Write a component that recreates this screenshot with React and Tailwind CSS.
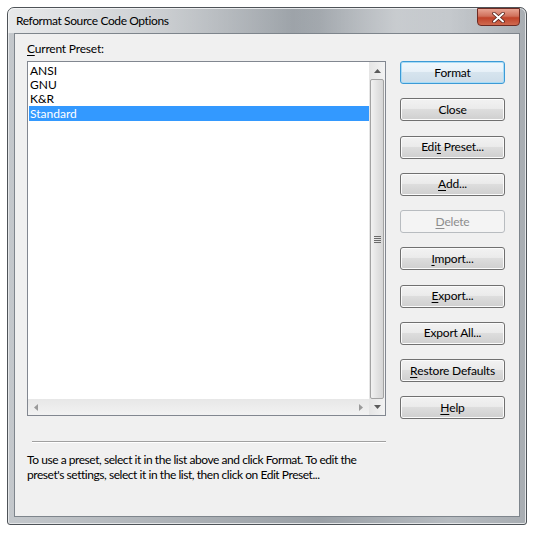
import React from "react";

const font = { fontFamily: 'Lato, "Noto Sans", sans-serif' };

function Btn({ children, primary, disabled }) {
  let cls =
    "h-[23px] w-[105px] rounded-[3px] border flex items-center justify-center text-[12px] leading-none tracking-[-0.2px] ";
  if (primary) {
    cls +=
      "border-[#3c9ad6] bg-[linear-gradient(#f0f7fc_0%,#e8f1f8_45%,#d6e4ee_50%,#cddde9_100%)] text-black shadow-[inset_0_0_0_1px_#a9dcf6]";
  } else if (disabled) {
    cls += "border-[#b8bcc0] bg-[#f4f4f4] text-[#8d8d8d]";
  } else {
    cls +=
      "border-[#707070] bg-[linear-gradient(#f2f2f2_0%,#ebebeb_45%,#dddddd_50%,#cfcfcf_100%)] text-black shadow-[inset_0_0_0_1px_#fbfbfb]";
  }
  return <div className={cls}>{children}</div>;
}

function U({ children }) {
  return <span className="underline underline-offset-2">{children}</span>;
}

export default function App() {
  return (
    <div className="w-[535px] h-[533px] bg-white" style={font}>
      <div className="pl-[7px] pt-[7px]">
        <div className="w-[520px] h-[518px] rounded-t-[7px] rounded-b-[3px] border border-[#4e5358] bg-[linear-gradient(90deg,#c4c8cc_0%,#abb0b5_35%,#9aa0a6_60%,#b6bbc0_85%,#a8adb2_100%)] shadow-[inset_0_0_0_1px_#e4e6e8] flex flex-col">
          <div className="h-[25px] flex items-center justify-between pl-[8px] pr-[6px] bg-[linear-gradient(90deg,rgba(255,255,255,0.6)_0%,rgba(255,255,255,0.35)_30%,rgba(255,255,255,0)_55%,rgba(255,255,255,0.35)_75%,rgba(255,255,255,0)_100%)] rounded-t-[6px]">
            <span className="text-[12px] text-black tracking-[-0.4px]">Reformat Source Code Options</span>
            <div className="w-[43px] h-[18px] -mt-[7px] rounded-b-[4px] border border-[#6d2a22] bg-[linear-gradient(#e8a493_0%,#d0705b_45%,#c0432a_55%,#d06a4f_100%)] flex items-center justify-center">
              <svg width="13" height="11" viewBox="0 0 13 11">
                <path d="M2 1.5 L11 9.5 M11 1.5 L2 9.5" stroke="#4a1a14" strokeWidth="3.4" strokeLinecap="round" />
                <path d="M2 1.5 L11 9.5 M11 1.5 L2 9.5" stroke="#ffffff" strokeWidth="2" strokeLinecap="round" />
              </svg>
            </div>
          </div>
          <div className="flex-1 mx-[6px] mb-[7px] border border-[#7e858c] bg-[#f0f0f0] flex">
            <div className="w-[371px] shrink-0 pl-[12px] pt-[7px] flex flex-col">
              <div className="h-[16px] leading-[16px] text-[12px] text-black tracking-[-0.2px]">
                <U>C</U>urrent Preset:
              </div>
              <div className="mt-[4px] w-[359px] h-[355px] border border-[#828790] bg-white flex flex-col">
                <div className="flex flex-1">
                  <div className="flex-1 pt-[2px] pl-[1px] text-[12px]">
                    <div className="h-[14px] leading-[14px] pl-[1px]">ANSI</div>
                    <div className="h-[14px] leading-[14px] pl-[1px]">GNU</div>
                    <div className="h-[14px] leading-[14px] pl-[1px]">K&amp;R</div>
                    <div className="h-[15px] leading-[15px] pl-[1px] bg-[#3399ff] text-white">Standard</div>
                  </div>
                  <div className="w-[16px] bg-[linear-gradient(90deg,#e5e5e5,#f3f3f3)] flex flex-col">
                    <div className="h-[17px] flex items-center justify-center">
                      <svg width="7" height="4" viewBox="0 0 7 4"><path d="M0 4 L3.5 0 L7 4Z" fill="#5a5a5a" /></svg>
                    </div>
                    <div className="flex-1 mx-[1px] rounded-[2px] border border-[#a3a3a3] bg-[linear-gradient(90deg,#f2f2f2,#e3e3e3_50%,#d6d6d6)] flex items-center justify-center">
                      <svg width="7" height="7" viewBox="0 0 7 7">
                        <path d="M0 0.5 H7 M0 2.5 H7 M0 4.5 H7 M0 6.5 H7" stroke="#6a6a6a" strokeWidth="1" />
                      </svg>
                    </div>
                  </div>
                </div>
                <div className="h-[16px] flex">
                  <div className="flex-1 bg-[linear-gradient(#e7e7e7,#f2f2f2)] flex items-center justify-between px-[6px]">
                    <svg width="4" height="7" viewBox="0 0 4 7"><path d="M4 0 L0 3.5 L4 7Z" fill="#9a9a9a" /></svg>
                    <svg width="4" height="7" viewBox="0 0 4 7"><path d="M0 0 L4 3.5 L0 7Z" fill="#9a9a9a" /></svg>
                  </div>
                  <div className="w-[16px] bg-[linear-gradient(90deg,#e5e5e5,#f3f3f3)] flex items-center justify-center">
                    <svg width="7" height="4" viewBox="0 0 7 4"><path d="M0 0 L3.5 4 L7 0Z" fill="#5a5a5a" /></svg>
                  </div>
                </div>
              </div>
              <div className="mt-[25px] ml-[5px] w-[354px] h-[2px] border-t border-[#a0a0a0] border-b border-b-white" />
              <div className="mt-[9px] text-[12px] leading-[15px] text-black whitespace-nowrap tracking-[-0.45px]">
                To use a preset, select it in the list above and click Format. To edit the
                <br />
                preset's settings, select it in the list, then click on Edit Preset...
              </div>
            </div>
            <div className="ml-[14px] pt-[27px] flex flex-col gap-[14.25px]">
              <Btn primary>Format</Btn>
              <Btn>Close</Btn>
              <Btn>
                Edi<U>t</U>&nbsp;Preset...
              </Btn>
              <Btn>
                <U>A</U>dd...
              </Btn>
              <Btn disabled>
                <U>D</U>elete
              </Btn>
              <Btn>
                <U>I</U>mport...
              </Btn>
              <Btn>
                <U>E</U>xport...
              </Btn>
              <Btn>Export All...</Btn>
              <Btn>
                <U>R</U>estore Defaults
              </Btn>
              <Btn>
                <U>H</U>elp
              </Btn>
            </div>
          </div>
        </div>
      </div>
    </div>
  );
}
